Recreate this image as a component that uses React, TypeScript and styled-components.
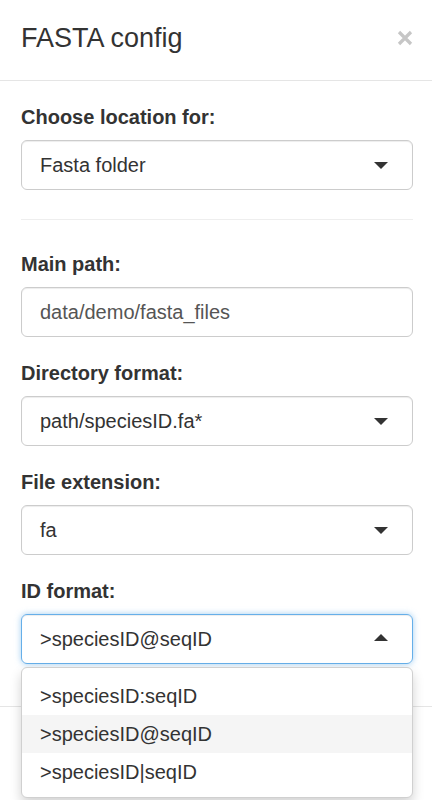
import React from "react";
import styled, { createGlobalStyle } from "styled-components";

const GlobalStyle = createGlobalStyle`
  html, body {
    margin: 0;
    padding: 0;
    background: #fff;
    font-family: "Liberation Sans", Arial, sans-serif;
    color: #333;
  }
  * { box-sizing: border-box; }
`;

const Modal = styled.div`
  width: 432px;
  height: 800px;
  background: #fff;
  overflow: hidden;
`;

const Header = styled.div`
  height: 81px;
  padding: 21px 19px 21px 21px;
  border-bottom: 1px solid #e5e5e5;
  display: flex;
  align-items: center;
  justify-content: space-between;
`;

const Title = styled.h4`
  margin: -3px 0 0;
  font-size: 27px;
  font-weight: 400;
  line-height: 37px;
  color: #333;
`;

const Close = styled.button`
  border: none;
  background: none;
  padding: 0;
  margin-top: -5px;
  width: 16px;
  height: 16px;
  display: flex;
  align-items: center;
  justify-content: center;
  opacity: 0.22;
`;

const Body = styled.div`
  padding: 21px 19px 21px 21px;
  height: 625px;
`;

const FormGroup = styled.div`
  margin-bottom: 21px;
  position: relative;
`;

const Label = styled.label`
  display: block;
  font-size: 20px;
  font-weight: 700;
  line-height: 31px;
  margin-bottom: 7px;
  color: #333;
`;

const Divider = styled.hr`
  margin: 29px 0;
  border: 0;
  border-top: 1px solid #eee;
`;

const TextInput = styled.div`
  height: 50px;
  border: 1px solid #ccc;
  border-radius: 6px;
  padding: 0 18px;
  display: flex;
  align-items: center;
  font-size: 20px;
  color: #555;
  box-shadow: inset 0 1px 1px rgba(0, 0, 0, 0.075);
`;

const SelectBox = styled.div<{ $open?: boolean }>`
  height: 50px;
  border: 1px solid ${(p) => (p.$open ? "#66afe9" : "#ccc")};
  border-radius: 6px;
  padding: 0 18px;
  display: flex;
  align-items: center;
  justify-content: space-between;
  font-size: 20px;
  color: #333;
  box-shadow: ${(p) =>
    p.$open
      ? "inset 0 1px 1px rgba(0,0,0,0.075), 0 0 6px rgba(102,175,233,0.6)"
      : "inset 0 1px 1px rgba(0,0,0,0.075)"};
`;

const Caret = styled.span<{ $up?: boolean }>`
  width: 0;
  height: 0;
  margin-right: 6px;
  border-left: 7px solid transparent;
  border-right: 7px solid transparent;
  ${(p) =>
    p.$up
      ? "border-bottom: 7px solid #333; margin-top: -3px;"
      : "border-top: 7px solid #333; margin-top: 1px;"}
`;

const Dropdown = styled.div`
  position: absolute;
  left: 0;
  right: 0;
  top: 91px;
  z-index: 10;
  background: #fff;
  border: 1px solid #d0d0d0;
  border-radius: 6px;
  padding: 9px 0 6px;
  box-shadow: 0 6px 12px rgba(0, 0, 0, 0.175);
`;

const Option = styled.div<{ $active?: boolean }>`
  height: 38px;
  line-height: 38px;
  padding: 0 18px;
  font-size: 20px;
  color: #333;
  background: ${(p) => (p.$active ? "#f5f5f5" : "transparent")};
`;

const Footer = styled.div`
  border-top: 1px solid #e5e5e5;
  padding: 21px 19px 21px 21px;
  display: flex;
  justify-content: flex-end;
`;

const Button = styled.button`
  height: 49px;
  padding: 0 17px;
  font-size: 20px;
  font-family: inherit;
  color: #333;
  background: #fff;
  border: 1px solid #ccc;
  border-radius: 6px;
`;

type SelectProps = { label: string; value: string };

const Select = (props: SelectProps) => (
  <FormGroup>
    <Label>{props.label}</Label>
    <SelectBox>
      <span>{props.value}</span>
      <Caret />
    </SelectBox>
  </FormGroup>
);

const idFormats = [">speciesID:seqID", ">speciesID@seqID", ">speciesID|seqID"];

const App = () => {
  return (
    <Modal>
      <GlobalStyle />
      <Header>
        <Title>FASTA config</Title>
        <Close>
          <svg width="16" height="16" viewBox="0 0 16 16">
            <path d="M2 2 L14 14 M14 2 L2 14" stroke="#000" strokeWidth="3.2" />
          </svg>
        </Close>
      </Header>
      <Body>
        <Select label="Choose location for:" value="Fasta folder" />
        <Divider />
        <FormGroup>
          <Label>Main path:</Label>
          <TextInput>data/demo/fasta_files</TextInput>
        </FormGroup>
        <Select label="Directory format:" value="path/speciesID.fa*" />
        <Select label="File extension:" value="fa" />
        <FormGroup>
          <Label>ID format:</Label>
          <SelectBox $open>
            <span>{">speciesID@seqID"}</span>
            <Caret $up />
          </SelectBox>
          <Dropdown>
            {idFormats.map((f) => (
              <Option key={f} $active={f === ">speciesID@seqID"}>
                {f}
              </Option>
            ))}
          </Dropdown>
        </FormGroup>
      </Body>
      <Footer>
        <Button>Close</Button>
      </Footer>
    </Modal>
  );
};

export default App;
